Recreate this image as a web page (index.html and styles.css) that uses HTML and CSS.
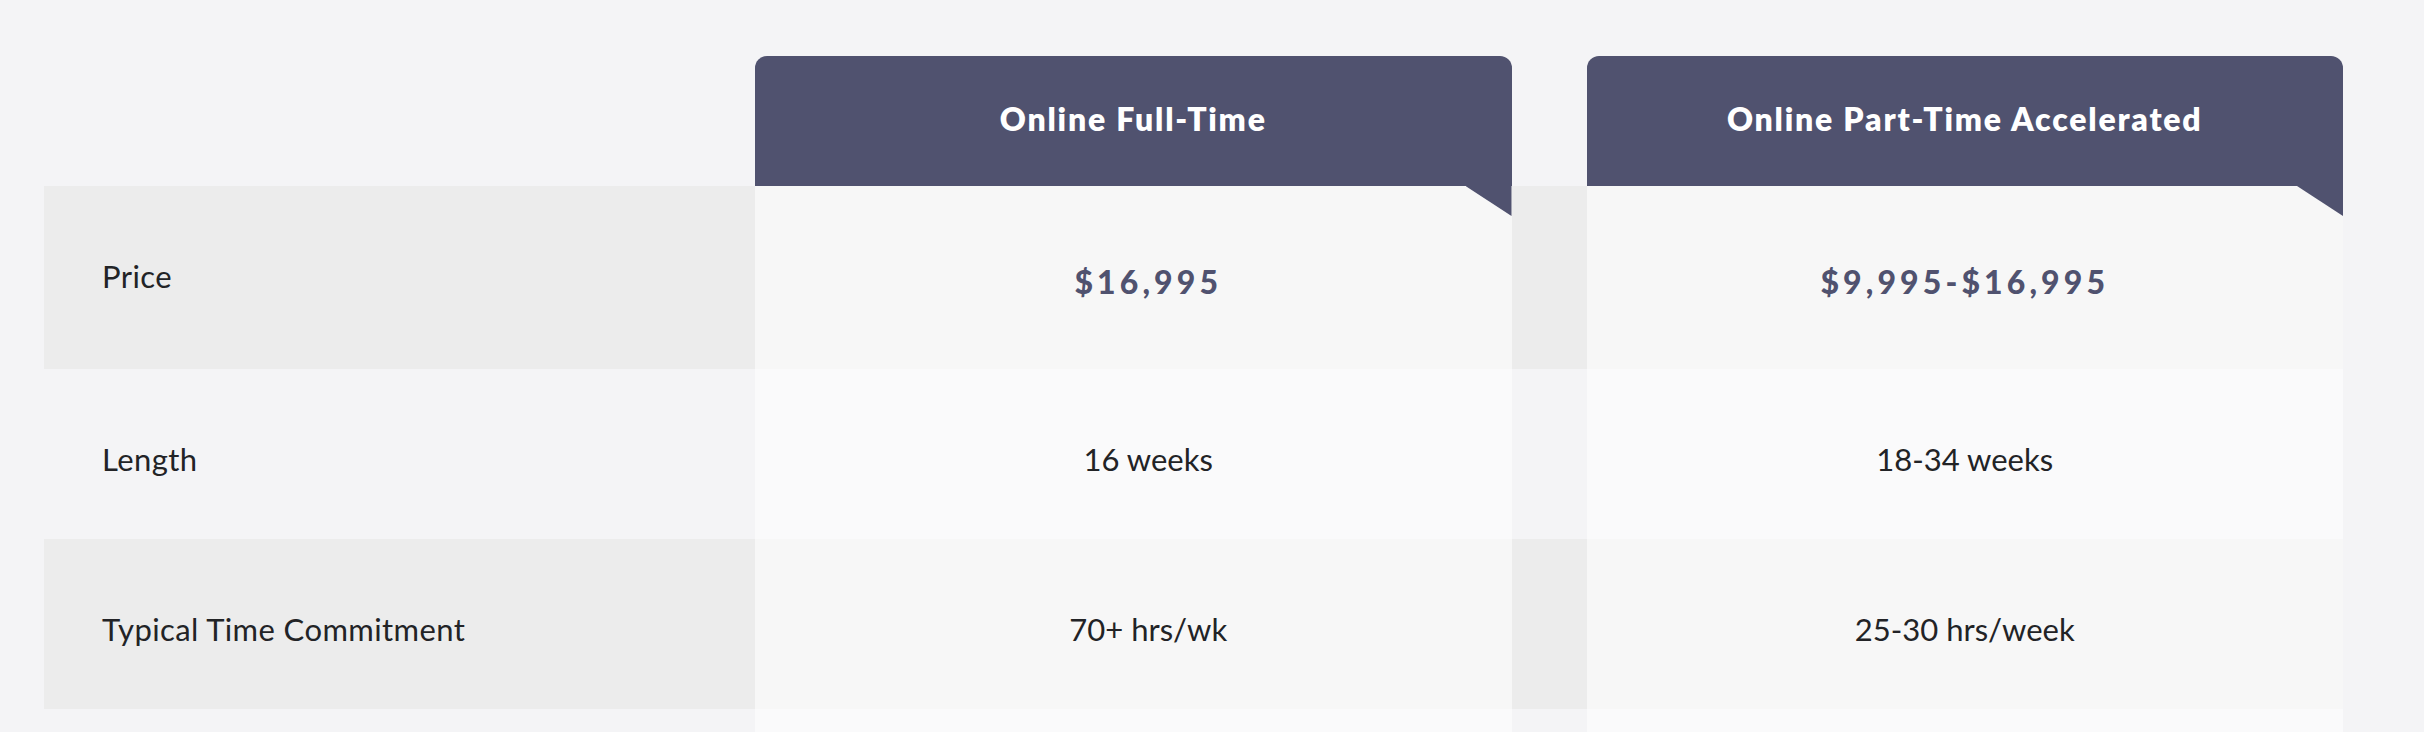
FILE: index.html
```html
<!DOCTYPE html>
<html lang="en">
<head>
<meta charset="utf-8">
<title>Program comparison</title>
<link rel="stylesheet" href="styles.css">
</head>
<body>
<section class="compare">
  <div class="grid head">
    <div class="cell empty"></div>
    <div class="plan-head"><h3>Online Full-Time</h3></div>
    <div class="gap"></div>
    <div class="plan-head"><h3>Online Part-Time Accelerated</h3></div>
  </div>

  <div class="grid row alt">
    <div class="cell label">Price</div>
    <div class="cell value first price">$16,995</div>
    <div class="gap"></div>
    <div class="cell value price">$9,995-$16,995</div>
  </div>

  <div class="grid row">
    <div class="cell label">Length</div>
    <div class="cell value first">16 weeks</div>
    <div class="gap"></div>
    <div class="cell value">18-34 weeks</div>
  </div>

  <div class="grid row alt">
    <div class="cell label">Typical Time Commitment</div>
    <div class="cell value first">70+ hrs/wk</div>
    <div class="gap"></div>
    <div class="cell value">25-30 hrs/week</div>
  </div>

  <div class="grid row">
    <div class="cell label"></div>
    <div class="cell value first"></div>
    <div class="gap"></div>
    <div class="cell value"></div>
  </div>
</section>
</body>
</html>
```

FILE: styles.css
```css
* { box-sizing: border-box; }

html, body {
  margin: 0;
  background: #f4f4f6;
}

body {
  font-family: Lato, "Noto Sans", sans-serif;
  color: #222326;
}

.compare {
  padding: 56px 81px 0 44px;
}

.grid {
  display: grid;
  grid-template-columns: 711px 1fr 75px 1fr;
}

.row.alt {
  background: #ececec;
}

.plan-head {
  position: relative;
  background: #50526f;
  border-radius: 12px 12px 0 0;
  height: 130px;
  padding-top: 43px;
  text-align: center;
}

.plan-head::after {
  content: "";
  position: absolute;
  right: 0;
  top: 100%;
  width: 46px;
  height: 30px;
  background: #50526f;
  clip-path: polygon(0 0, 100% 0, 100% 100%);
  z-index: 2;
}

.plan-head h3 {
  margin: 0;
  color: #ffffff;
  font-size: 32px;
  line-height: 40px;
  font-weight: 800;
  letter-spacing: 1.8px;
}

.cell {
  font-size: 31px;
  line-height: 40px;
  padding: 70px 0 60px;
}

.label {
  padding-left: 58px;
  letter-spacing: 0.4px;
}

.value {
  background: rgba(255, 255, 255, 0.58);
  text-align: center;
}

.value.first {
  padding-left: 30px;
}

.value.price {
  color: #50526f;
  font-size: 32px;
  font-weight: 900;
  line-height: 53px;
  letter-spacing: 4.1px;
  padding-top: 69px;
  padding-bottom: 61px;
}
```
